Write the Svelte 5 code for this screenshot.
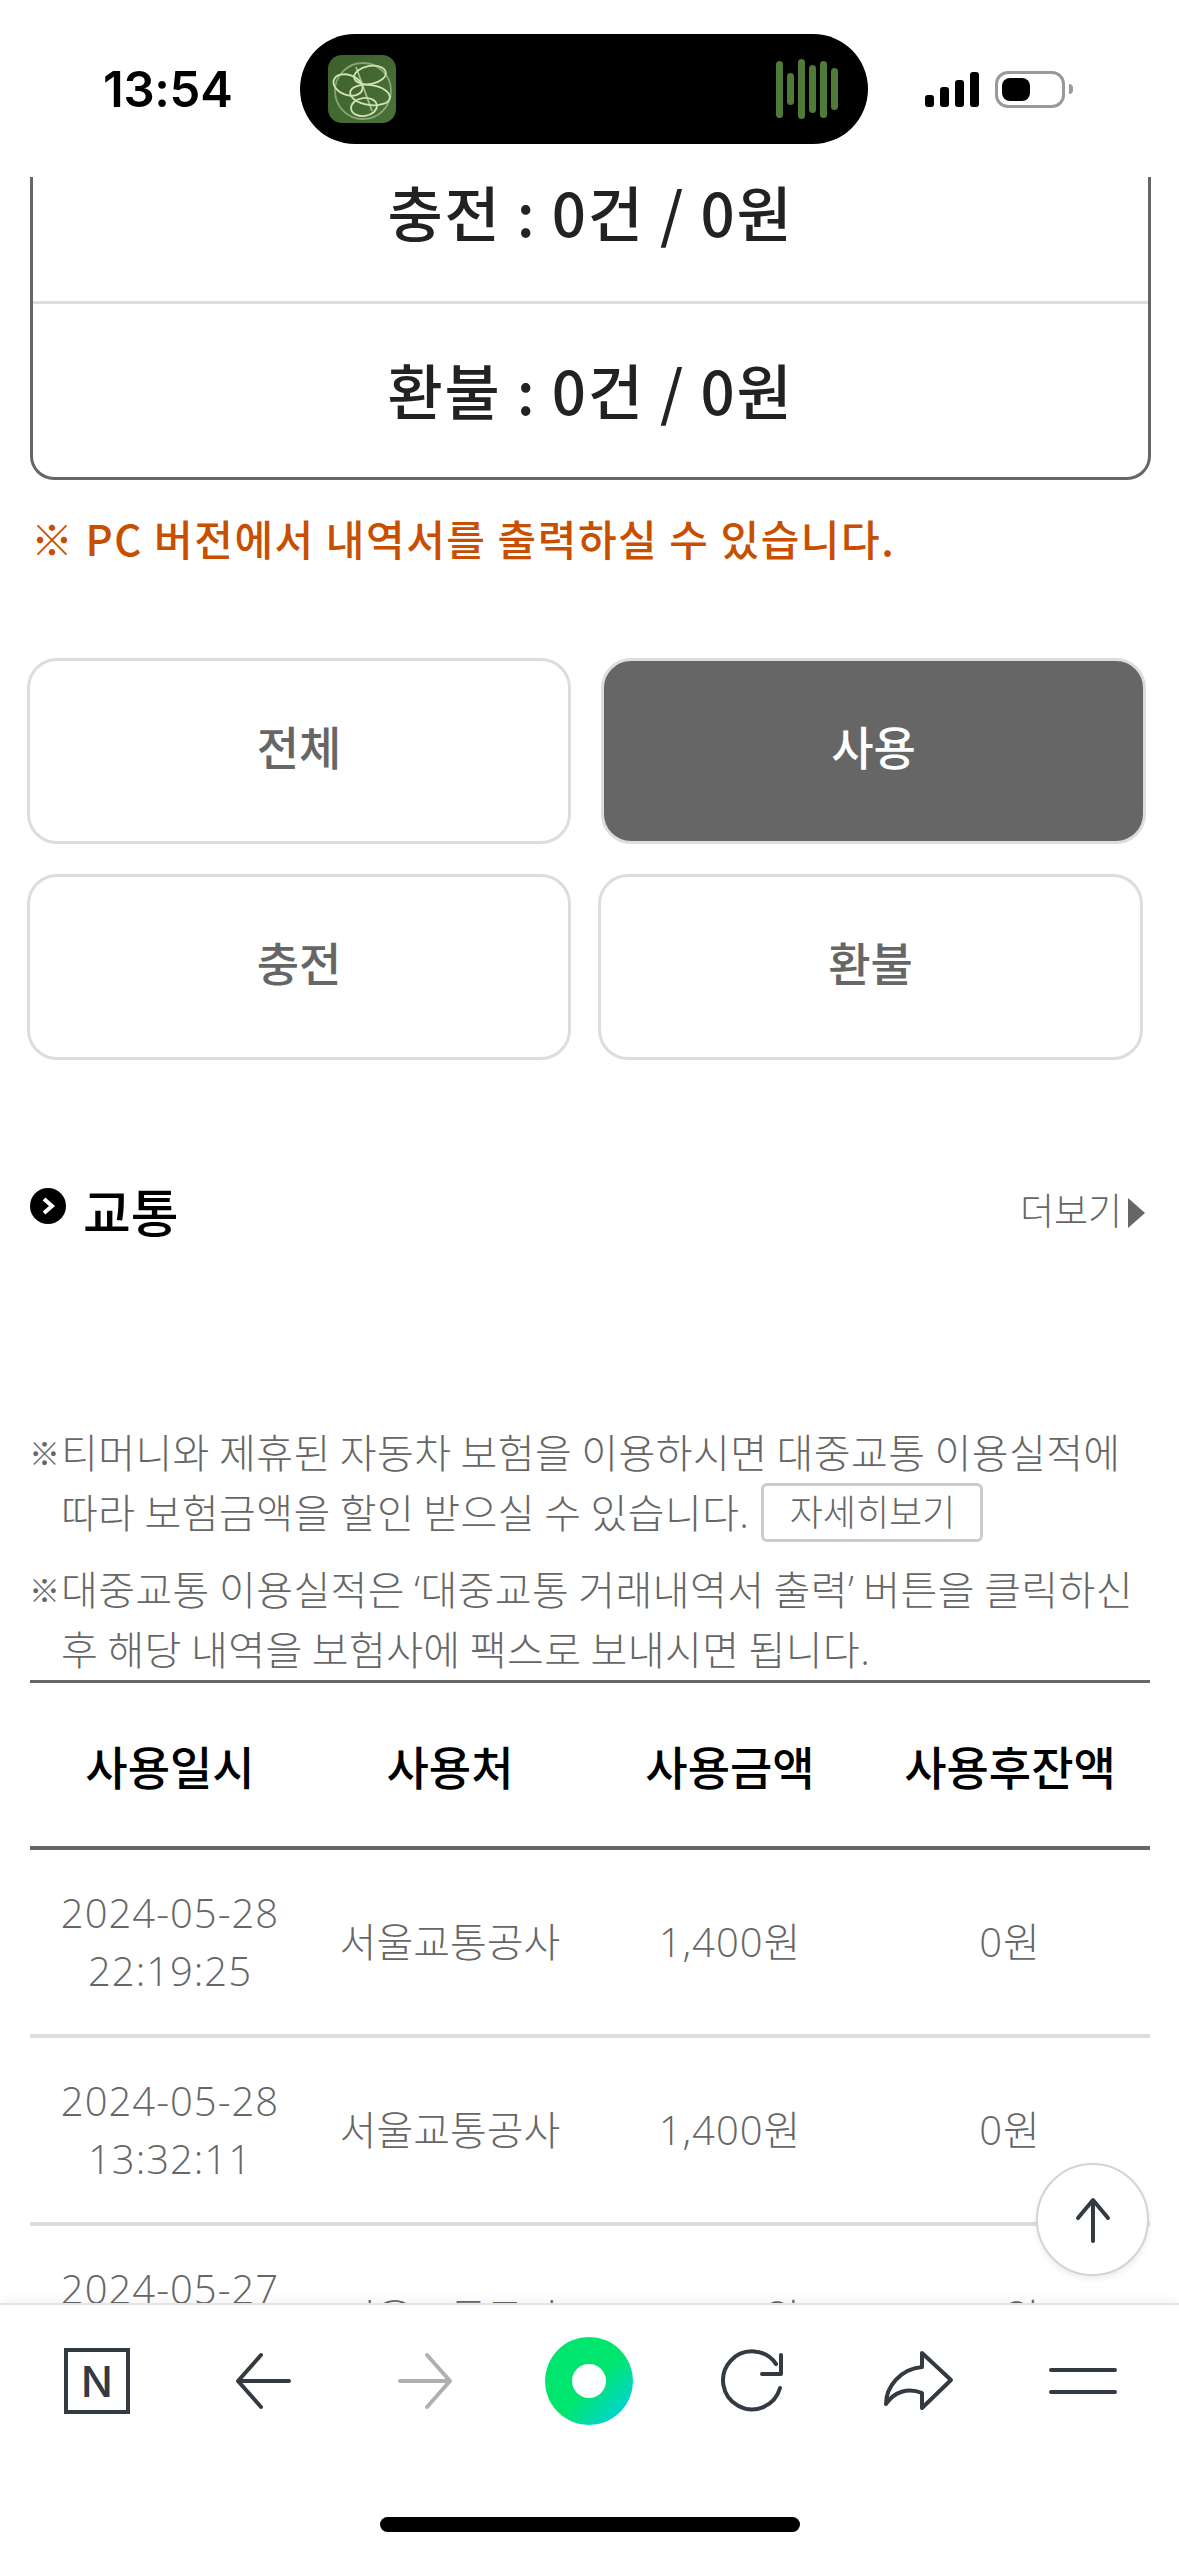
<script>
	const filters = [
		[
			{ label: '전체', active: false },
			{ label: '사용', active: true }
		],
		[
			{ label: '충전', active: false },
			{ label: '환불', active: false }
		]
	];

	const rows = [
		{ date: '2024-05-28', time: '22:19:25' },
		{ date: '2024-05-28', time: '13:32:11' },
		{ date: '2024-05-27', time: '08:41:03' }
	];

	const bars = [57, 32, 60, 48, 57, 42];
	const signal = [12, 20, 27, 35];
</script>

<div class="phone">
	<header class="status">
		<div class="time">13:54</div>
		<div class="island">
			<svg class="cover" viewBox="0 0 68 68" width="68" height="68">
				<defs>
					<linearGradient id="leaf" x1="0" y1="0" x2="1" y2="1">
						<stop offset="0" stop-color="#3c5f2c" />
						<stop offset="1" stop-color="#4a7238" />
					</linearGradient>
				</defs>
				<rect width="68" height="68" rx="14" fill="url(#leaf)" />
				<g fill="none" stroke="#cfe3b4" stroke-width="1.8">
					<circle cx="35" cy="36" r="28" stroke-opacity="0.5" />
					<ellipse cx="20" cy="30" rx="15" ry="10" transform="rotate(20 20 30)" />
					<ellipse cx="42" cy="20" rx="16" ry="9" transform="rotate(-10 42 20)" />
					<ellipse cx="42" cy="40" rx="20" ry="10" transform="rotate(8 42 40)" />
					<ellipse cx="36" cy="52" rx="13" ry="9" transform="rotate(-8 36 52)" />
					<path d="M28 12 L44 56" stroke-opacity="0.7" />
				</g>
			</svg>
			<div class="wave">
				{#each bars as h}
					<span style="height: {h}px"></span>
				{/each}
			</div>
		</div>
		<div class="indicators">
			<div class="signal">
				{#each signal as h}
					<span style="height: {h}px"></span>
				{/each}
			</div>
			<div class="battery"><span></span></div>
			<div class="nub"></div>
		</div>
	</header>

	<main class="viewport">
		<div class="page">
			<section class="summary">
				<div class="summary-row">충전 : 0건 / 0원</div>
				<div class="summary-row">환불 : 0건 / 0원</div>
			</section>
			<p class="notice">※ PC 버전에서 내역서를 출력하실 수 있습니다.</p>

			<div class="filters">
				{#each filters as row, i}
					<div class="filter-row" class:tight={i === 1}>
						{#each row as f}
							<button class="filter" class:active={f.active}>{f.label}</button>
						{/each}
					</div>
				{/each}
			</div>

			<div class="section-head">
				<h2>
					<svg viewBox="0 0 36 36" width="36" height="36">
						<circle cx="18" cy="18" r="18" fill="#000" />
						<path d="M14 11 L22 18 L14 25" fill="none" stroke="#fff" stroke-width="4" />
					</svg>
					교통
				</h2>
				<div class="more">더보기<i></i></div>
			</div>

			<div class="notes">
				<div class="note">
					<span class="mark">※</span>
					<p>
						티머니와 제휴된 자동차 보험을 이용하시면 대중교통 이용실적에<br />
						따라 보험금액을 할인 받으실 수 있습니다.
						<button class="detail">자세히보기</button>
					</p>
				</div>
				<div class="note">
					<span class="mark">※</span>
					<p>
						대중교통 이용실적은 ‘대중교통 거래내역서 출력’ 버튼을 클릭하신<br />
						후 해당 내역을 보험사에 팩스로 보내시면 됩니다.
					</p>
				</div>
			</div>

			<table>
				<thead>
					<tr>
						<th>사용일시</th>
						<th>사용처</th>
						<th>사용금액</th>
						<th>사용후잔액</th>
					</tr>
				</thead>
				<tbody>
					{#each rows as r}
						<tr>
							<td class="num">{r.date}<br />{r.time}</td>
							<td>서울교통공사</td>
							<td class="num">1,400원</td>
							<td class="num">0원</td>
						</tr>
					{/each}
				</tbody>
			</table>
		</div>
	</main>

	<button class="to-top" aria-label="맨 위로">
		<svg viewBox="0 0 56 56" width="56" height="56">
			<path d="M28 49 V9 M13 26 L28 8 L43 26" fill="none" stroke="#343a42" stroke-width="4" stroke-linecap="round" stroke-linejoin="round" />
		</svg>
	</button>

	<footer class="toolbar">
		<nav class="tools">
			<div class="slot"><div class="naver">N</div></div>
			<div class="slot">
				<svg viewBox="0 0 100 88" width="100" height="88">
					<path d="M50 18 L27 44 L50 70 M27 44 H78" class="line" />
				</svg>
			</div>
			<div class="slot">
				<svg viewBox="0 0 100 88" width="100" height="88">
					<path d="M52 18 L75 44 L52 70 M75 44 H25" class="line off" />
				</svg>
			</div>
			<div class="slot">
				<svg viewBox="0 0 100 88" width="100" height="88">
					<defs>
						<linearGradient id="dot" x1="0.2" y1="0.2" x2="0.88" y2="0.88">
							<stop offset="0.5" stop-color="#00e56e" />
							<stop offset="1" stop-color="#00d4d4" />
						</linearGradient>
					</defs>
					<circle cx="50" cy="44" r="44" fill="url(#dot)" />
					<circle cx="50" cy="44" r="17" fill="#fff" />
				</svg>
			</div>
			<div class="slot">
				<svg viewBox="0 0 100 88" width="100" height="88">
					<path d="M76 51 A29 29 0 1 1 72 27 M77 18 V37 H58" class="line" />
				</svg>
			</div>
			<div class="slot">
				<svg viewBox="0 0 100 88" width="100" height="88">
					<path d="M54 16 L83 43 L54 71 V56 C40 50 26 55 18 67 C18 50 32 32 54 30 Z" class="line" />
				</svg>
			</div>
			<div class="slot">
				<svg viewBox="0 0 100 88" width="100" height="88">
					<path d="M19 33 H83 M19 55 H83" class="line" />
				</svg>
			</div>
		</nav>
		<div class="home"></div>
	</footer>
</div>

<style>
	:global(body) {
		margin: 0;
		background: #fff;
	}

	.phone {
		position: relative;
		display: flex;
		flex-direction: column;
		width: 1179px;
		height: 2556px;
		overflow: hidden;
		background: #fff;
		font-family: "Open Sans", "Noto Sans CJK KR", sans-serif;
		color: #666;
	}

	.status {
		flex: none;
		display: grid;
		grid-template-columns: 300px 568px 1fr;
		align-items: center;
		height: 110px;
		padding: 34px 0 33px;
		background: #fff;
	}

	.time {
		padding-left: 103px;
		font-family: Inter, "Liberation Sans", sans-serif;
		font-size: 49px;
		font-weight: 600;
		letter-spacing: -0.3px;
		color: #000;
	}

	.island {
		display: flex;
		align-items: center;
		justify-content: space-between;
		height: 110px;
		padding: 0 30px 0 28px;
		box-sizing: border-box;
		border-radius: 55px;
		background: #000;
	}

	.wave {
		display: flex;
		align-items: center;
		gap: 4px;
	}

	.wave span {
		width: 7px;
		border-radius: 4px;
		background: #507a38;
	}

	.indicators {
		display: flex;
		align-items: center;
		padding-left: 57px;
	}

	.signal {
		display: flex;
		align-items: flex-end;
		gap: 6px;
	}

	.signal span {
		width: 9px;
		border-radius: 3px;
		background: #000;
	}

	.battery {
		box-sizing: border-box;
		width: 70px;
		height: 37px;
		margin-left: 16px;
		padding: 4px;
		border: 3px solid #999;
		border-radius: 13px;
	}

	.battery span {
		display: block;
		width: 28px;
		height: 100%;
		border-radius: 8px;
		background: #000;
	}

	.nub {
		width: 4px;
		height: 10px;
		margin-left: 4px;
		border-radius: 0 4px 4px 0;
		background: #999;
	}

	.viewport {
		flex: 1;
		min-height: 0;
		overflow: hidden;
	}

	.page {
		margin-top: -53px;
	}

	.summary {
		box-sizing: border-box;
		width: 1121px;
		height: 356px;
		margin-left: 30px;
		border: 3px solid #666;
		border-radius: 24px;
	}

	.summary-row {
		display: flex;
		align-items: center;
		justify-content: center;
		box-sizing: border-box;
		height: 174px;
		padding-bottom: 6px;
		font-family: "Noto Sans CJK KR", sans-serif;
		font-size: 60px;
		font-weight: 500;
		letter-spacing: 1.8px;
		line-height: 70px;
		color: #222;
	}

	.summary-row + .summary-row {
		height: 179px;
		border-top: 3px solid #ddd;
	}

	.notice {
		margin: 28px 0 0 31px;
		font-family: "Noto Sans CJK KR", sans-serif;
		font-size: 42px;
		font-weight: 500;
		line-height: 60px;
		letter-spacing: 1.55px;
		color: #c84e00;
	}

	.filters {
		display: flex;
		flex-direction: column;
		gap: 30px;
		margin: 90px 0 0 27px;
	}

	.filter-row {
		display: grid;
		grid-template-columns: 544px 545px;
		column-gap: 30px;
	}

	.filter-row.tight {
		column-gap: 27px;
	}

	.filter {
		box-sizing: border-box;
		height: 186px;
		padding: 0 0 8px;
		border: 3px solid #ddd;
		border-radius: 30px;
		background: #fff;
		font-family: inherit;
		font-size: 46px;
		font-weight: 500;
		line-height: 60px;
		color: #666;
	}

	.filter.active {
		background: #666;
		color: #fff;
	}

	.section-head {
		display: flex;
		align-items: center;
		justify-content: space-between;
		height: 60px;
		margin-top: 121px;
		padding: 0 34px 0 30px;
	}

	h2 {
		display: flex;
		align-items: center;
		gap: 17px;
		margin: 0;
		padding-top: 4px;
		font-size: 52px;
		font-weight: 500;
		line-height: 60px;
		color: #000;
	}

	h2 svg {
		margin-top: -14px;
	}

	.more {
		display: flex;
		align-items: center;
		gap: 6px;
		font-size: 37px;
		font-weight: 300;
		line-height: 50px;
	}

	.more i {
		width: 0;
		height: 0;
		margin-top: 4px;
		border-left: 17px solid #666;
		border-top: 15px solid transparent;
		border-bottom: 15px solid transparent;
	}

	.notes {
		display: flex;
		flex-direction: column;
		gap: 17px;
		margin-top: 182px;
		padding-left: 29px;
	}

	.note {
		display: flex;
		font-size: 40px;
		font-weight: 300;
		line-height: 60px;
		letter-spacing: 0.4px;
		word-spacing: -1.6px;
	}

	.mark {
		flex: none;
		width: 32px;
		font-size: 31px;
		letter-spacing: 0;
	}

	.note p {
		margin: 0;
		white-space: nowrap;
	}

	.detail {
		box-sizing: border-box;
		width: 222px;
		height: 59px;
		margin-left: 3px;
		padding: 0;
		border: 3px solid #ccc;
		border-radius: 6px;
		background: #fff;
		font-family: inherit;
		font-size: 36px;
		font-weight: 300;
		line-height: 50px;
		color: #666;
		vertical-align: top;
	}

	table {
		width: 1120px;
		margin: 0 0 0 30px;
		table-layout: fixed;
		border-collapse: collapse;
	}

	th {
		height: 163px;
		padding: 0;
		border-top: 3px solid #666;
		border-bottom: 4px solid #666;
		font-size: 46px;
		font-weight: 500;
		color: #000;
	}

	td {
		height: 184px;
		padding: 0;
		border-bottom: 4px solid #ddd;
		font-size: 40px;
		font-weight: 300;
		line-height: 58px;
		text-align: center;
		color: #666;
	}

	td.num {
		letter-spacing: 1px;
	}

	.to-top {
		position: absolute;
		right: 30px;
		bottom: 280px;
		display: flex;
		align-items: center;
		justify-content: center;
		box-sizing: border-box;
		width: 113px;
		height: 113px;
		padding: 0;
		border: 2px solid #d4d4d4;
		border-radius: 50%;
		background: #fff;
		box-shadow: 0 3px 6px rgba(0, 0, 0, 0.08);
	}

	.toolbar {
		position: relative;
		flex: none;
		box-sizing: border-box;
		height: 253px;
		padding-top: 32px;
		border-top: 2px solid #e4e4e4;
		background: #fff;
		box-shadow: 0 -4px 10px rgba(0, 0, 0, 0.04);
	}

	.tools {
		display: flex;
		justify-content: space-between;
		padding: 0 47px;
	}

	.slot {
		display: flex;
		align-items: center;
		justify-content: center;
		width: 100px;
		height: 88px;
	}

	.naver {
		display: flex;
		align-items: center;
		justify-content: center;
		box-sizing: border-box;
		width: 66px;
		height: 66px;
		border: 4px solid #343a42;
		font-family: Inter, "Liberation Sans", sans-serif;
		font-size: 42px;
		font-weight: 500;
		color: #343a42;
	}

	.line {
		fill: none;
		stroke: #343a42;
		stroke-width: 4;
		stroke-linecap: round;
		stroke-linejoin: round;
	}

	.line.off {
		stroke: #b0b0b0;
	}

	.home {
		width: 420px;
		height: 15px;
		margin: 92px auto 0;
		border-radius: 8px;
		background: #000;
	}
</style>
